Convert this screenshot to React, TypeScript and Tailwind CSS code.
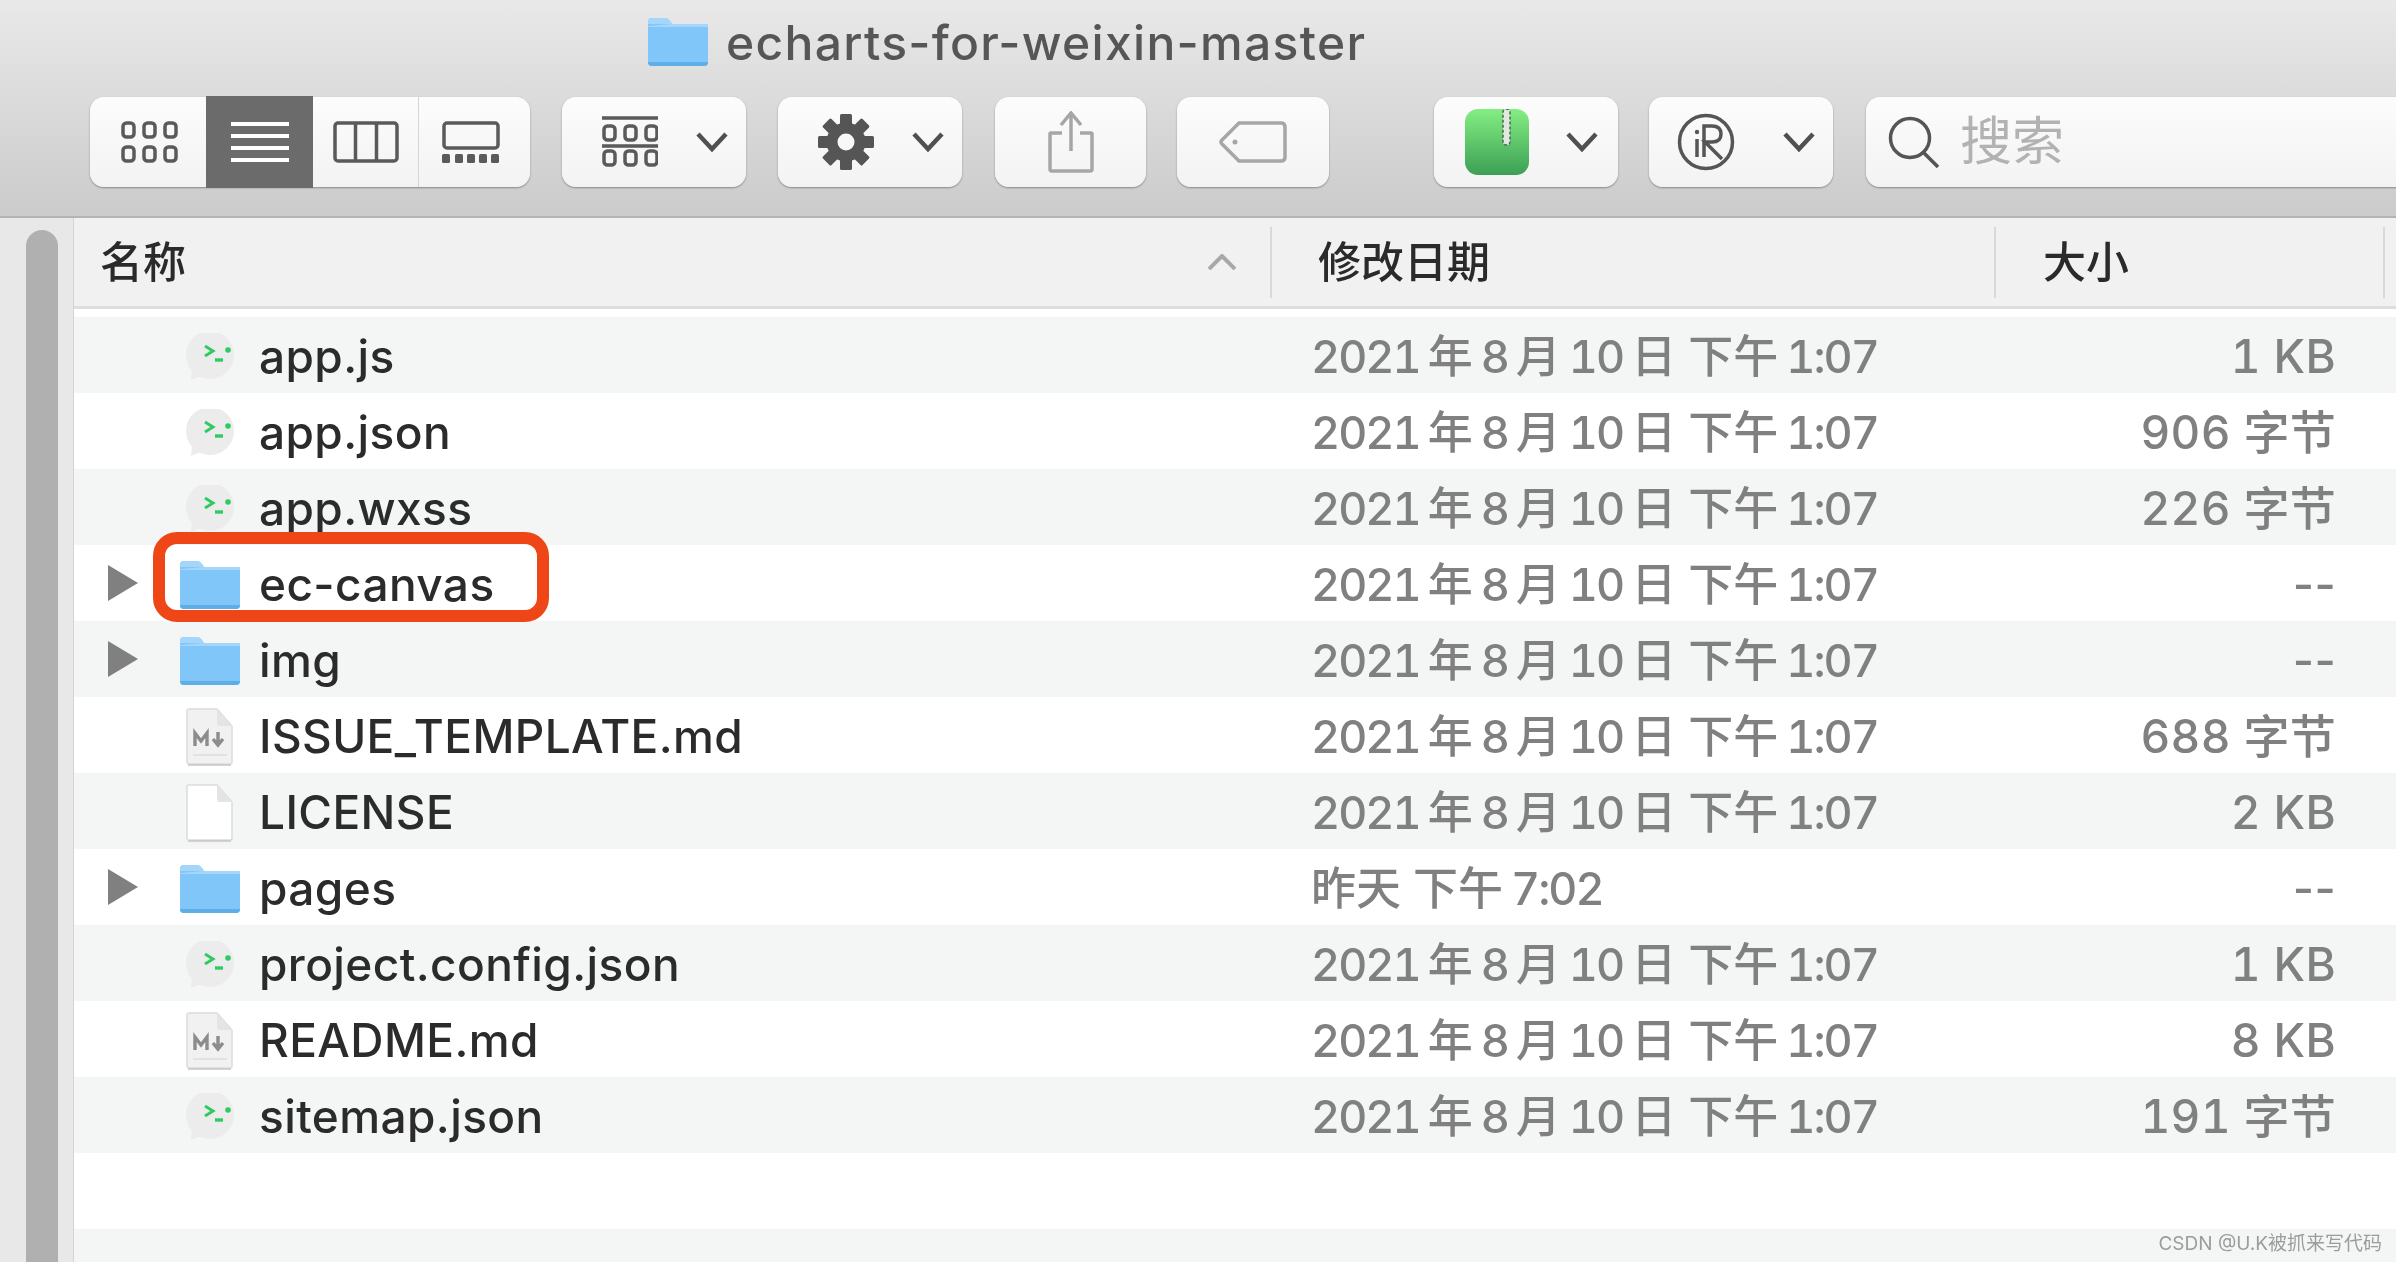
import React from 'react';

const FONT = 'font-["Inter","Noto_Sans_CJK_SC",sans-serif]';

type RowKind = 'wechat' | 'folder' | 'md' | 'doc';

const rows: { name: string; date: string; size: string; kind: RowKind }[] = [
  { name: 'app.js', date: '2021年8月10日 下午1:07', size: '1 KB', kind: 'wechat' },
  { name: 'app.json', date: '2021年8月10日 下午1:07', size: '906 字节', kind: 'wechat' },
  { name: 'app.wxss', date: '2021年8月10日 下午1:07', size: '226 字节', kind: 'wechat' },
  { name: 'ec-canvas', date: '2021年8月10日 下午1:07', size: '--', kind: 'folder' },
  { name: 'img', date: '2021年8月10日 下午1:07', size: '--', kind: 'folder' },
  { name: 'ISSUE_TEMPLATE.md', date: '2021年8月10日 下午1:07', size: '688 字节', kind: 'md' },
  { name: 'LICENSE', date: '2021年8月10日 下午1:07', size: '2 KB', kind: 'doc' },
  { name: 'pages', date: '昨天 下午7:02', size: '--', kind: 'folder' },
  { name: 'project.config.json', date: '2021年8月10日 下午1:07', size: '1 KB', kind: 'wechat' },
  { name: 'README.md', date: '2021年8月10日 下午1:07', size: '8 KB', kind: 'md' },
  { name: 'sitemap.json', date: '2021年8月10日 下午1:07', size: '191 字节', kind: 'wechat' },
];

// macOS puts a small gap where digits meet CJK characters
const DateText = ({ value }: { value: string }) => {
  const parts = value.match(/[0-9:]+|[^0-9:]+/g) ?? [];
  return (
    <>
      {parts.map((part, i) => (
        <span key={i} className={`${i > 0 ? 'ml-[8px]' : ''} ${/[0-9]/.test(part) ? 'tracking-[-2px]' : ''}`}>
          {part}
        </span>
      ))}
    </>
  );
};

const Chevron = () => (
  <svg width="32" height="20" viewBox="0 0 32 20" fill="none" stroke="#505050" strokeWidth="4.5">
    <path d="M2 2 L16 17 L30 2" />
  </svg>
);

const FolderIcon = ({ className }: { className: string }) => (
  <svg className={className} viewBox="0 0 60 48">
    <path d="M0 4 Q0 0 4 0 H17 Q20 0 22 3 L24 6 H57 Q60 6 60 9 V44 Q60 48 56 48 H4 Q0 48 0 44 Z" fill="#80c6f8" />
    <path d="M0 6 H24 L22 3 Q20 0 17 0 H4 Q0 0 0 4 Z M24 6 H60 V9 H0 V8 Z" fill="#a3d6fa" />
    <path d="M0 44 H60 Q60 48 56 48 H4 Q0 48 0 44 Z" fill="#5eaee8" />
  </svg>
);

const WechatIcon = () => (
  <svg className="w-[54px] h-[48px] mt-[4px]" viewBox="0 0 54 48">
    <circle cx="27" cy="22" r="24" fill="#ececec" />
    <path d="M9 36 L8 47 L20 42 Z" fill="#ececec" />
    <path d="M22 13 L30 18 L22 23" fill="none" stroke="#2fcb62" strokeWidth="3" />
    <path d="M32 27 H40" stroke="#2fcb62" strokeWidth="3.4" />
    <circle cx="45" cy="17" r="2.8" fill="#2fcb62" />
  </svg>
);

const DocIcon = ({ md }: { md?: boolean }) => (
  <svg className="w-[48px] h-[58px] mt-[4px]" viewBox="0 0 48 58">
    <path
      d="M3 1 H31 L46 18 V54 Q46 56 44 56 H3 Q1 56 1 54 V3 Q1 1 3 1 Z"
      fill={md ? '#f1f1f1' : '#ffffff'}
      stroke="#dcdcdc"
      strokeWidth="1.5"
    />
    <path d="M31 1 V15 Q31 18 34 18 H46 Z" fill="#e4e4e4" />
    <path d="M2 57 H45" stroke="#c4c4c4" strokeWidth="1.5" />
    {md && (
      <>
        <path d="M9 38 V25 L15 33 L21 25 V38" fill="none" stroke="#8c8c8c" strokeWidth="3.4" />
        <path d="M32 24 V35 M27 31 L32 37 L37 31" fill="none" stroke="#8c8c8c" strokeWidth="3.4" />
        <path d="M7 47 H41" stroke="#e2e2e2" strokeWidth="2" />
      </>
    )}
  </svg>
);

const Dots = ({ y }: { y: number }) => (
  <>
    {[2, 23, 44].map((x) => (
      <rect key={x} x={x} y={y} width="11" height="14" rx="3.5" fill="none" stroke="#5a5a5a" strokeWidth="3.5" />
    ))}
  </>
);

const ToolButton = ({ className, children }: { className: string; children: React.ReactNode }) => (
  <div
    className={`h-[90px] shrink-0 flex items-center rounded-[14px] bg-gradient-to-b from-[#fcfcfc] to-[#f3f3f3] shadow-[0_1px_2px_rgba(0,0,0,0.35)] ${className}`}
  >
    {children}
  </div>
);

const App = () => {
  return (
    <div className={`relative w-[2396px] h-[1262px] overflow-hidden flex flex-col bg-white blur-[0.5px] ${FONT}`}>
      {/* toolbar */}
      <div className="h-[218px] shrink-0 flex flex-col bg-gradient-to-b from-[#e9e9e9] to-[#cbcbcb] border-b-2 border-[#b4b4b4]">
        <div className="h-[97px] shrink-0 flex items-start pl-[648px] pt-[18px]">
          <FolderIcon className="w-[60px] h-[48px]" />
          <span className="ml-[18px] text-[48px] leading-[52px] -mt-[1px] tracking-[1.3px] font-[450] text-[#565656]">echarts-for-weixin-master</span>
        </div>
        <div className="flex items-center pl-[90px]">
          <ToolButton className="w-[440px] relative">
            <div className="w-[116px] flex justify-center pl-[6px]">
              <svg width="60" height="42" viewBox="0 0 60 42">
                <Dots y={2} />
                <Dots y={26} />
              </svg>
            </div>
            <div className="w-[107px] h-[92px] flex items-center justify-center bg-[#6b6b6b]">
              <svg width="58" height="42" viewBox="0 0 58 42" fill="none" stroke="#ffffff" strokeWidth="4">
                <path d="M0 3 H58 M0 15 H58 M0 27 H58 M0 39 H58" />
              </svg>
            </div>
            <div className="w-[106px] h-full flex items-center justify-center border-r border-[#d6d6d6]">
              <svg width="66" height="42" viewBox="0 0 66 42" fill="none" stroke="#5a5a5a" strokeWidth="3.5">
                <rect x="2" y="2" width="62" height="38" rx="3" />
                <path d="M22.5 2 V40 M43.5 2 V40" />
              </svg>
            </div>
            <div className="flex-1 flex justify-center pr-[8px]">
              <svg width="58" height="42" viewBox="0 0 58 42">
                <rect x="2" y="2" width="54" height="25" rx="3" fill="none" stroke="#5a5a5a" strokeWidth="3.5" />
                {[0, 13, 25, 37, 49].map((x) => (
                  <rect key={x} x={x} y="33" width="8" height="9" rx="1.5" fill="#5a5a5a" />
                ))}
              </svg>
            </div>
          </ToolButton>

          <ToolButton className="w-[184px] ml-[32px] pl-[40px]">
            <svg width="56" height="52" viewBox="0 0 56 52">
              <path d="M0 2 H56 M0 30 H56" stroke="#5a5a5a" strokeWidth="3.5" />
              <g transform="translate(0 8)">
                <Dots y={2} />
              </g>
              <g transform="translate(0 34)">
                <Dots y={1} />
              </g>
            </svg>
            <span className="ml-[38px]">
              <Chevron />
            </span>
          </ToolButton>

          <ToolButton className="w-[184px] ml-[32px] pl-[40px]">
            <svg width="56" height="56" viewBox="-28 -28 56 56">
              {[0, 45, 90, 135, 180, 225, 270, 315].map((a) => (
                <rect key={a} x="-6" y="-28" width="12" height="14" rx="1.5" fill="#555555" transform={`rotate(${a})`} />
              ))}
              <circle r="14" fill="none" stroke="#555555" strokeWidth="11" />
            </svg>
            <span className="ml-[38px]">
              <Chevron />
            </span>
          </ToolButton>

          <ToolButton className="w-[151px] ml-[33px] justify-center">
            <svg width="46" height="62" viewBox="0 0 46 62" fill="none" stroke="#a6a6a6" strokeWidth="3.5">
              <path d="M14 22 H3 Q2 22 2 23 V58 Q2 60 4 60 H42 Q44 60 44 58 V23 Q44 22 43 22 H32" />
              <path d="M23 2 V40" />
              <path d="M13 14 L23 2 L33 14" />
            </svg>
          </ToolButton>

          <ToolButton className="w-[152px] ml-[31px] justify-center">
            <svg width="68" height="42" viewBox="0 0 68 42" fill="none" stroke="#a6a6a6" strokeWidth="3.5">
              <path d="M20 2 H62 Q66 2 66 6 V36 Q66 40 62 40 H20 L3 23 Q1 21 3 19 Z" />
              <circle cx="16" cy="21" r="2.5" fill="#a6a6a6" stroke="none" />
            </svg>
          </ToolButton>

          <ToolButton className="w-[184px] ml-[105px] pl-[31px]">
            <svg width="64" height="66" viewBox="0 0 64 66">
              <defs>
                <linearGradient id="zipGreen" x1="0" y1="0" x2="0" y2="1">
                  <stop offset="0" stopColor="#85ee82" />
                  <stop offset="1" stopColor="#3c9f55" />
                </linearGradient>
              </defs>
              <rect width="64" height="66" rx="13" fill="url(#zipGreen)" />
              <rect x="38" y="0" width="7" height="36" rx="3" fill="#dfe9df" stroke="#4a6a50" strokeWidth="1.5" strokeDasharray="3 2" />
            </svg>
            <span className="ml-[37px]">
              <Chevron />
            </span>
          </ToolButton>

          <ToolButton className="w-[184px] ml-[31px] pl-[28px]">
            <svg width="58" height="58" viewBox="0 0 58 58" fill="none" stroke="#555555">
              <circle cx="29" cy="29" r="26.5" strokeWidth="3.5" />
              <path d="M20 26 V44" strokeWidth="3.5" />
              <circle cx="20" cy="19" r="2.2" fill="#555555" stroke="none" />
              <path d="M27 44 V13 H35 Q44 13 44 21 Q44 29 35 29 H28 L45 46" strokeWidth="3.5" />
            </svg>
            <span className="ml-[48px]">
              <Chevron />
            </span>
          </ToolButton>

          <ToolButton className="w-[560px] ml-[33px] pl-[22px] rounded-r-none">
            <svg width="52" height="52" viewBox="0 0 52 52" fill="none" stroke="#555555" strokeWidth="3.5">
              <circle cx="22" cy="22" r="19.5" />
              <path d="M35 36 L50 51" />
            </svg>
            <span className="ml-[20px] text-[52px] leading-none text-[#b2b2b2]">搜索</span>
          </ToolButton>
        </div>
      </div>

      <div className="flex flex-1 min-h-0">
        {/* scroll gutter */}
        <div className="w-[74px] shrink-0 flex bg-[#e8e8e8] border-r border-[#d4d4d4] pl-[26px] pt-[12px]">
          <div className="w-[32px] h-[1100px] rounded-full bg-[#b0b0b0]" />
        </div>

        <div className="flex-1 flex flex-col min-w-0">
          {/* column headers */}
          <div className="h-[91px] shrink-0 flex items-center bg-[#f1f1f1] border-b-[3px] border-[#dedede] text-[#2a2a2a] text-[43px] font-medium">
            <div className="w-[1198px] shrink-0 h-[71px] flex items-center justify-between pl-[26px] pr-[34px] border-r-2 border-[#d9d9d9]">
              <span>名称</span>
              <svg width="28" height="16" viewBox="0 0 28 16" fill="none" stroke="#a8a8a8" strokeWidth="4">
                <path d="M1 15 L14 2 L27 15" />
              </svg>
            </div>
            <div className="w-[724px] shrink-0 h-[71px] flex items-center pl-[46px] border-r-2 border-[#d9d9d9]">修改日期</div>
            <div className="w-[389px] shrink-0 h-[71px] flex items-center pl-[47px] border-r-2 border-[#d9d9d9]">大小</div>
          </div>

          <div className="h-[8px] shrink-0 bg-white" />

          {/* file rows */}
          {rows.map((row, i) => (
            <div
              key={row.name}
              className={`h-[76px] shrink-0 flex items-center text-[46px] font-[450] ${i % 2 === 0 ? 'bg-[#f4f5f5]' : 'bg-white'}`}
            >
              <div className="w-[34px] shrink-0" />
              <div className="w-[30px] shrink-0">
                {row.kind === 'folder' && (
                  <svg width="30" height="36" viewBox="0 0 30 36">
                    <path d="M0 0 L30 18 L0 36 Z" fill="#808080" />
                  </svg>
                )}
              </div>
              <div className="w-[60px] shrink-0 ml-[42px] flex justify-center">
                {row.kind === 'folder' && <FolderIcon className="w-[60px] h-[48px] shrink-0 mt-[3px]" />}
                {row.kind === 'wechat' && <WechatIcon />}
                {row.kind === 'md' && <DocIcon md />}
                {row.kind === 'doc' && <DocIcon />}
              </div>
              <div className="w-[1052px] shrink-0 ml-[19px] text-[#2b2b2b] tracking-[0.4px] pt-[2px]">{row.name}</div>
              <div className="w-[640px] shrink-0 text-[45px] text-[#808080] tabular-nums whitespace-nowrap pt-[3px]">
                <DateText value={row.date} />
              </div>
              <div
                className={`w-[385px] shrink-0 text-right text-[#808080] tracking-[0.3px] whitespace-nowrap pt-[3px] ${row.size === '--' ? '' : 'tabular-nums'}`}
              >
                {row.size}
              </div>
            </div>
          ))}

          <div className="h-[76px] shrink-0 bg-white" />
          <div className="flex-1 bg-[#f4f5f5]" />
        </div>
      </div>

      {/* red annotation round ec-canvas */}
      <div className="absolute left-[153px] top-[532px] w-[396px] h-[90px] rounded-[24px] border-[12px] border-[#ee4616]" />

      {/* watermark */}
      <div className="absolute right-[14px] bottom-[7px] text-[19px] leading-[22px] text-[#9c9c9c] whitespace-nowrap">CSDN @U.K被抓来写代码</div>
    </div>
  );
};

export default App;
